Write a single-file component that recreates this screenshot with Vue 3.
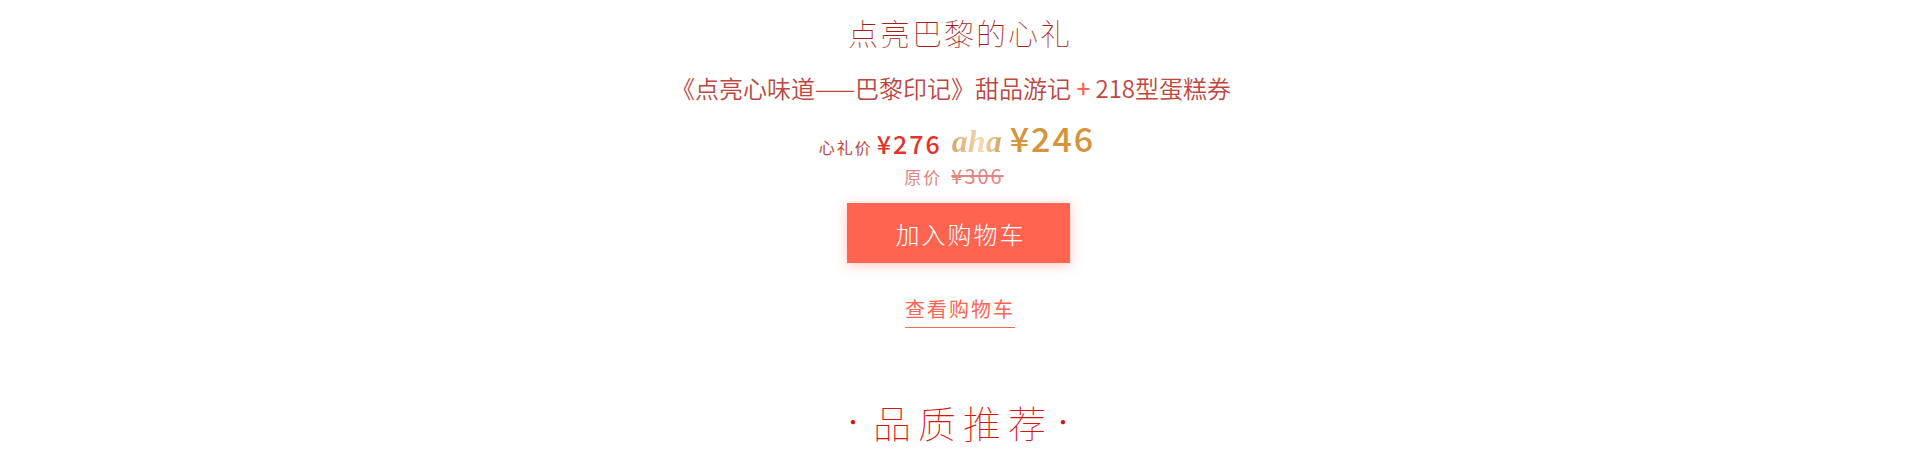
<script setup>
const price = 276
const memberPrice = 246
const originalPrice = 306
</script>

<template>
  <main class="page">
    <section class="product">
      <h1 class="title">点亮巴黎的心礼</h1>
      <p class="bundle">《点亮心味道——巴黎印记》甜品游记 <span class="plus">+</span> 218型蛋糕券</p>
      <div class="prices">
        <p class="regular"><span class="gift">心礼价</span><span class="price">¥{{ price }}</span></p>
        <p class="club"><span class="logo">aha</span><span class="member">¥{{ memberPrice }}</span></p>
      </div>
      <p class="original"><span>原价</span><del>¥{{ originalPrice }}</del></p>
      <button class="add" type="button">加入购物车</button>
      <a class="cart" href="#cart">查看购物车</a>
    </section>
    <h2 class="recommend"><span class="dot">·</span><span class="name">品质推荐</span><span class="dot">·</span></h2>
  </main>
</template>

<style>
body {
  background: #fff;
}
</style>

<style scoped>
.page {
  font-family: "Noto Sans CJK SC", sans-serif;
  color: #bd463f;
}
.product {
  display: flex;
  flex-direction: column;
  align-items: center;
}
.title {
  margin: 0;
  font-size: 30px;
  font-weight: 100;
  line-height: 64px;
  letter-spacing: 2px;
  color: #a81e16;
}
.bundle {
  margin: 0 0 4px;
  padding-right: 18px;
  font-size: 24px;
  font-weight: 350;
  line-height: 48px;
}
.plus {
  color: #ff6450;
  font-weight: 500;
}
.prices {
  display: flex;
  align-items: flex-end;
  gap: 10px;
  padding-right: 6px;
  letter-spacing: 2px;
}
.regular,
.club {
  display: flex;
  align-items: baseline;
  margin: 0;
}
.regular {
  gap: 4px;
  line-height: 32px;
}
.club {
  gap: 6px;
  line-height: 44px;
}
.gift {
  font-size: 16px;
  font-weight: 400;
}
.price {
  font-size: 25px;
  font-weight: 500;
  color: #e0352b;
}
.logo {
  padding-right: 2px;
  font-family: "Liberation Serif", serif;
  font-size: 32px;
  font-style: italic;
  font-weight: 700;
  letter-spacing: 0;
  color: transparent;
  background: linear-gradient(90deg, #d6a76c, #f5d9ad 55%, #cf9c5d);
  background-clip: text;
}
.member {
  font-size: 34px;
  font-weight: 500;
  color: #d6953c;
}
.original {
  display: flex;
  align-items: baseline;
  gap: 9px;
  margin: 1px 0 0;
  padding-right: 12px;
  font-size: 17px;
  font-weight: 400;
  line-height: 24px;
  letter-spacing: 2px;
  color: #e08680;
}
.original del {
  font-size: 20px;
}
.add {
  min-width: 223px;
  height: 60px;
  margin: 14px 3px 0 0;
  padding: 0 32px;
  border: 0;
  background: #ff6450;
  box-shadow: 0 2px 12px rgba(255, 100, 80, 0.35);
  color: #fff;
  font-family: inherit;
  font-size: 24px;
  font-weight: 300;
  letter-spacing: 2px;
  text-indent: 4px;
  cursor: pointer;
}
.cart {
  margin-top: 28px;
  border-bottom: 1px solid #ff6450;
  color: #ff6450;
  font-size: 20px;
  line-height: 36px;
  letter-spacing: 2px;
  text-decoration: none;
}
.recommend {
  display: flex;
  justify-content: center;
  margin: 64px 0 0;
  padding-right: 4px;
  font-size: 38px;
  font-weight: 100;
  line-height: 60px;
  color: #d9150a;
}
.name {
  margin-left: 10px;
  letter-spacing: 7px;
}
.dot {
  font-size: 20px;
  font-weight: 400;
}
</style>
